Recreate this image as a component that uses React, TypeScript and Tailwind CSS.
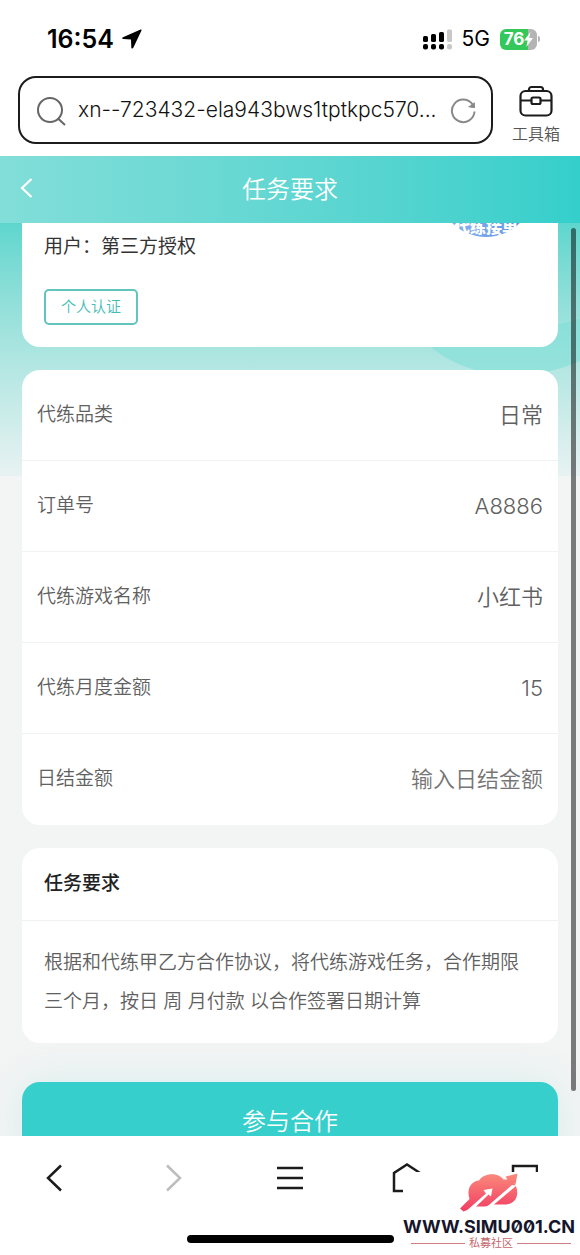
import React, { useState } from 'react';

// Order details shown as label / value rows
interface Detail {
  label: string;
  value: string;
}

const details: Detail[] = [
  { label: '代练品类', value: '日常' },
  { label: '订单号', value: 'A8886' },
  { label: '代练游戏名称', value: '小红书' },
  { label: '代练月度金额', value: '15' },
];

function StatusBar() {
  return (
    <div className="flex h-[76px] items-center justify-between pt-[2px] pr-10 pl-[47px] text-black">
      <div className="flex items-center gap-2">
        <span className="text-[25px] leading-8 font-semibold">16:54</span>
        <svg width="20" height="20" viewBox="0 0 20 20" fill="currentColor" aria-hidden="true">
          <path d="M18.6.5 1 8.2c-1.200.5-1 1.900.200 1.900l7.800.300.300 8c0 1.300 1.500 1.500 2 .300L19.500 1.600c.3-.8-.2-1.400-.9-1.100Z" />
        </svg>
      </div>
      <div className="flex items-center gap-[10px]">
        <svg width="29" height="21" viewBox="0 0 29 21" aria-hidden="true">
          <g fill="#000">
            <rect x="0" y="7" width="5" height="6" rx="1.500" />
            <rect x="8" y="5" width="5" height="8" rx="1.500" />
            <rect x="16" y="3" width="5" height="10" rx="1.500" />
            <rect x="0" y="15" width="5" height="5.500" rx="2" />
            <rect x="8" y="15" width="5" height="5.500" rx="2" />
            <rect x="16" y="15" width="5" height="5.500" rx="2" />
          </g>
          <g fill="#c8c8c8">
            <rect x="24" y="0.500" width="5" height="12.500" rx="1.500" />
            <rect x="24" y="15" width="5" height="5.500" rx="2" />
          </g>
        </svg>
        <span className="text-[21px] leading-6">5G</span>
        <div className="flex items-center gap-px">
          <div className="flex h-[21px] w-[37px] items-center justify-center rounded-md bg-linear-to-r from-[#34c759] from-75% to-[#b4b4b4] to-75% text-white">
            <span className="text-[17px] leading-5 font-bold">76</span>
            <svg width="9" height="15" viewBox="0 0 9 15" fill="currentColor" aria-hidden="true">
              <path d="M6.500 0 0 8.500h3.600L2.300 15 9 6H5.200Z" />
            </svg>
          </div>
          <div className="h-[6px] w-[2px] rounded-r-full bg-[#b4b4b4]" />
        </div>
      </div>
    </div>
  );
}

function AddressBar() {
  return (
    <div className="flex items-end gap-[19px] pr-5 pb-3 pl-[18px]">
      <div className="flex h-[68px] min-w-0 flex-1 items-center rounded-[18px] border-2 border-[#1c1c1c] pr-[14px] pl-4">
        <svg width="31" height="31" viewBox="0 0 31 31" fill="none" stroke="#666" strokeWidth="2" aria-hidden="true">
          <circle cx="14" cy="15" r="12" />
          <path d="m22 23.500 7 6.500" />
        </svg>
        <input
          type="text"
          readOnly
          aria-label="网址"
          value="xn--723432-ela943bws1tptkpc570..."
          className="ml-[11px] min-w-0 flex-1 bg-transparent text-[21px] leading-8 font-light text-[#111] outline-none"
        />
        <button type="button" aria-label="刷新" className="ml-1 shrink-0">
          <svg width="27" height="27" viewBox="0 0 27 27" fill="none" stroke="#8a8a8a" strokeWidth="2" aria-hidden="true">
            <path d="M24.500 14.500A11.300 11.300 0 1 1 22.800 7.800" />
            <path d="m24.300 5.500.200 5.200-6-1" fill="#8a8a8a" strokeWidth="1" />
          </svg>
        </button>
      </div>
      <button type="button" className="flex shrink-0 flex-col items-center gap-[7px] text-[#555]">
        <svg width="34" height="32" viewBox="0 0 34 32" fill="none" stroke="#1c1c1c" strokeWidth="2.200" aria-hidden="true">
          <rect x="1.500" y="6" width="31" height="24.500" rx="5" />
          <path d="M10 6V4.500a2.500 2.500 0 0 1 2.500-2.500h9A2.500 2.500 0 0 1 24 4.500V6M1.500 15.500H12.500M21.500 15.500h11" />
          <rect x="12.500" y="12.500" width="9" height="6.500" rx="1.500" />
        </svg>
        <span className="text-[16px] leading-5 font-[350]">工具箱</span>
      </button>
    </div>
  );
}

function Watermark() {
  return (
    <div className="absolute right-0 bottom-0 flex h-[83px] w-[177px] flex-col items-center bg-white pt-px pr-[5px]">
      <svg width="58" height="40" viewBox="0 0 58 40" aria-hidden="true">
        <defs>
          <linearGradient id="cloud" x1="0" y1="0" x2="0" y2="1">
            <stop offset="0" stopColor="#fa8a7c" />
            <stop offset="1" stopColor="#f23d62" />
          </linearGradient>
        </defs>
        <path
          fill="url(#cloud)"
          d="M9.500 26C6 15 12 8 19 7.500 23 0 38-1.500 43.500 6.500L47.500 6.500 45.500 3.500 57.500.5 55.500 11.500 53.500 9.500C58 14 59 24 53.500 28.500Q50.500 31 46.500 31.500H33L25 33.500H16L3.500 38.500 0 35.500Z"
        />
        <path fill="#fff" d="M4.500 39.500 26 20.500 23.500 17 32.500 15.500 31 23.500 28.500 21.500 16 33.800 10 40Z" />
        <path fill="#fff" d="M26 34.500 52 12 56.500 12.500 34 31.500 30 36Z" />
      </svg>
      <span className="mt-[3px] text-[18px] leading-[21px] font-bold whitespace-nowrap text-[#15152b] slashed-zero">
        WWW.SIMU001.CN
      </span>
      <div className="flex w-full items-center gap-1 pr-1 pl-2">
        <span className="h-px flex-1 bg-[#cf7f84]" />
        <span className="text-[11px] leading-3 text-[#c4666c]">私募社区</span>
        <span className="h-px flex-1 bg-[#cf7f84]" />
      </div>
    </div>
  );
}

function BrowserNav() {
  return (
    <footer className="relative z-10 h-[119px] shrink-0 bg-white">
      <nav className="grid h-[84px] grid-cols-5 items-center justify-items-center text-[#1c1c1c]">
        <button type="button" aria-label="后退">
          <svg width="28" height="30" viewBox="0 0 28 30" fill="none" stroke="currentColor" strokeWidth="2.500">
            <path d="M17 2.500 4 15l13 12.500" />
          </svg>
        </button>
        <button type="button" aria-label="前进" disabled className="text-[#bdbdbd]">
          <svg width="28" height="30" viewBox="0 0 28 30" fill="none" stroke="currentColor" strokeWidth="2.500">
            <path d="M7 2.500 20 15 7 27.500" />
          </svg>
        </button>
        <button type="button" aria-label="菜单">
          <svg width="26" height="30" viewBox="0 0 26 30" fill="none" stroke="currentColor" strokeWidth="2.500">
            <path d="M0 5h26M0 15h26M0 25h26" />
          </svg>
        </button>
        <button type="button" aria-label="主页">
          <svg width="30" height="30" viewBox="0 0 30 30" fill="none" stroke="currentColor" strokeWidth="2.500">
            <path d="M3 28V10L16 1.500 29 10v18Z" />
          </svg>
        </button>
        <button type="button" aria-label="标签页">
          <svg width="32" height="30" viewBox="0 0 32 30" fill="none" stroke="currentColor" strokeWidth="2.500">
            <rect x="7" y="3" width="24" height="24" />
          </svg>
        </button>
      </nav>
      <div className="mx-auto mt-[15px] h-2 w-[207px] rounded-full bg-black" />
      <Watermark />
    </footer>
  );
}

export default function App() {
  const [amount, setAmount] = useState('');

  return (
    <div className="flex h-screen flex-col overflow-hidden bg-white font-['Inter','Noto_Sans_CJK_SC',sans-serif]">
      <StatusBar />
      <AddressBar />

      <header className="relative z-10 grid h-[67px] shrink-0 grid-cols-[1fr_auto_1fr] items-center bg-linear-to-r from-[#82ded9] to-[#34cfcb] px-5 text-white">
        <button type="button" aria-label="返回" className="justify-self-start pb-1">
          <svg width="13" height="20" viewBox="0 0 13 20" fill="none" stroke="currentColor" strokeWidth="2.200">
            <path d="M11.500 1 2 10l9.500 9" />
          </svg>
        </button>
        <h1 className="text-[24px] leading-8 font-[350]">任务要求</h1>
      </header>

      <main className="relative min-h-0 flex-1 overflow-hidden bg-[#f3f4f4]">
        {/* Teal backdrop that fades out behind the cards */}
        <div className="absolute inset-x-0 top-0 h-[253px] overflow-hidden bg-linear-to-b from-[#5dd6ce] to-[#e8f2f2]">
          <svg className="absolute top-0 right-0" width="180" height="253" viewBox="0 0 180 253" aria-hidden="true">
            <path d="M0 90C50 165 130 160 180 138V96C150 104 120 110 90 110Z" fill="#7fe0d7" fillOpacity="0.600" />
          </svg>
        </div>

        {/* The list is scrolled, so the profile card starts above the fold */}
        <div className="relative -mt-[104px] flex flex-col gap-[23px] px-[22px]">
          <section className="flex justify-between rounded-[18px] bg-white p-[22px]">
            <div className="flex flex-col items-start gap-[26px] self-end">
              <p className="text-[19px] leading-8 text-[#333]">用户：第三方授权</p>
              <span className="flex h-9 items-center rounded-[5px] border-2 border-[#62c4bc] px-[15px] text-[15px] font-[350] text-[#45bdb3]">
                个人认证
              </span>
            </div>
            <div className="mr-[2px] mb-[88px] flex size-24 items-end justify-center rounded-full bg-linear-to-r from-[#8db4ea] to-[#5b92ea]">
              <span className="text-[16px] leading-5 font-black whitespace-nowrap text-white">代练接单</span>
            </div>
          </section>

          <section className="divide-y divide-[#f1f3f3] rounded-[18px] bg-white">
            {details.map(item => (
              <div key={item.label} className="flex h-[91px] items-center justify-between px-[15px] text-[#606060]">
                <span className="text-[19px] font-[350]">{item.label}</span>
                <span className="text-[22px] font-[350]">{item.value}</span>
              </div>
            ))}
            <div className="flex h-[91px] items-center justify-between px-[15px] text-[#606060]">
              <label htmlFor="amount" className="shrink-0 text-[19px] font-[350]">日结金额</label>
              <input
                id="amount"
                type="text"
                value={amount}
                onChange={(e) => setAmount(e.target.value)}
                placeholder="输入日结金额"
                className="min-w-0 flex-1 bg-transparent text-right text-[22px] font-[350] outline-none placeholder:text-[#757575]"
              />
            </div>
          </section>

          <section className="divide-y divide-[#f0f2f2] rounded-[18px] bg-white">
            <h2 className="flex h-[73px] items-center px-[22px] text-[19px] font-medium text-[#222]">任务要求</h2>
            <p className="p-[22px] text-[19px] leading-[39px] font-[350] text-[#606060]">
              根据和代练甲乙方合作协议，将代练游戏任务，合作期限三个月，按日 周 月付款 以合作签署日期计算
            </p>
          </section>

          <button type="button" className="mt-4 h-20 rounded-[18px] bg-[#36cfcb] text-[24px] font-[350] text-white shadow-[0_0_40px_rgba(54,207,203,0.15)]">
            参与合作
          </button>
        </div>

        <div className="absolute top-[5px] right-1 bottom-[45px] w-[5px] rounded-full bg-black/50" />
      </main>

      <BrowserNav />
    </div>
  );
}
